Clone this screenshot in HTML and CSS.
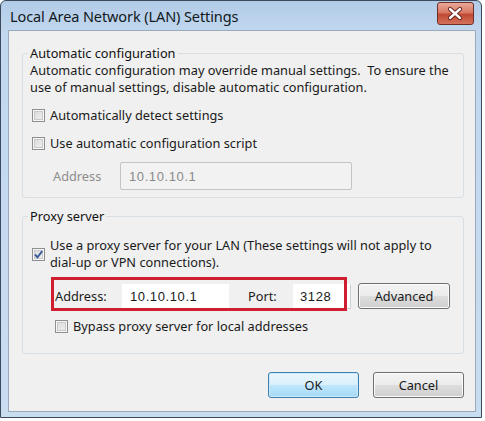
FILE: index.html
```html
<!DOCTYPE html>
<html>
<head>
<meta charset="utf-8">
<link rel="stylesheet" href="styles.css">
</head>
<body>
<div class="window">
  <div class="titlebar">
    <span class="title">Local Area Network (LAN) Settings</span>
    <span class="close">
      <svg width="37" height="23" viewBox="0 0 37 23">
        <path d="M13.5 7 L23.5 16 M23.5 7 L13.5 16" stroke="#6b2a22" stroke-width="4.6" stroke-linecap="round"/>
        <path d="M13.5 7 L23.5 16 M23.5 7 L13.5 16" stroke="#ffffff" stroke-width="2.6" stroke-linecap="round"/>
      </svg>
    </span>
  </div>
  <div class="client">
    <fieldset class="group first">
      <legend>Automatic configuration</legend>
      <p class="desc">Automatic configuration may override manual settings.&nbsp; To ensure the<br>use of manual settings, disable automatic configuration.</p>
      <div class="check r1"><span class="box"></span><span>Automatically detect settings</span></div>
      <div class="check r2"><span class="box"></span><span>Use automatic configuration script</span></div>
      <div class="script-row">
        <span class="dim-lbl">Address</span>
        <span class="field disabled">10.10.10.1</span>
      </div>
    </fieldset>
    <fieldset class="group second">
      <legend>Proxy server</legend>
      <div class="check multi">
        <span class="box">
          <svg width="11" height="11" viewBox="0 0 11 11"><path d="M2 5.5 L4.5 8.3 L9.2 2.2" fill="none" stroke="#3b5a9e" stroke-width="1.9"/></svg>
        </span>
        <span>Use a proxy server for your LAN (These settings will not apply to<br>dial-up or VPN connections).</span>
      </div>
      <div class="proxy-row">
        <span class="lbl addr">Address:</span>
        <span class="field addr-field">10.10.10.1</span>
        <span class="lbl port">Port:</span>
        <span class="field port-field">3128</span>
        <span class="btn adv">Advanced</span>
        <span class="highlight"></span>
      </div>
      <div class="check bypass"><span class="box"></span><span>Bypass proxy server for local addresses</span></div>
    </fieldset>
    <div class="actions">
      <span class="btn default">OK</span>
      <span class="btn">Cancel</span>
    </div>
  </div>
</div>
</body>
</html>
```

FILE: styles.css
```css
html, body {
  margin: 0;
  padding: 0;
  background: #ffffff;
}

body {
  font-family: "Noto Sans", "DejaVu Sans", sans-serif;
  font-size: 12.75px;
  color: #1a1a1a;
}

.window {
  width: 480px;
  height: 416px;
  border: 1px solid #3a4a5c;
  border-radius: 6px 6px 0 0;
  background: linear-gradient(180deg, #b2cbe7 0px, #c1d7ee 30px, #c9ddf1 100%);
  display: flex;
  flex-direction: column;
}

.titlebar {
  height: 29px;
  display: flex;
  align-items: flex-start;
  justify-content: space-between;
  padding-left: 9px;
}

.title {
  font-size: 14.5px;
  line-height: 20px;
  margin-top: 5px;
  color: #111820;
  letter-spacing: -0.1px;
}

.close {
  width: 37px;
  height: 23px;
  margin-top: 1px;
  margin-right: 7px;
  border: 1px solid #6e2f28;
  border-radius: 3px;
  box-sizing: border-box;
  background: linear-gradient(180deg, #e9a898 0%, #d97a66 45%, #c04a34 55%, #d4725c 100%);
  display: flex;
  overflow: hidden;
}

.close svg {
  margin-left: -1px;
  margin-top: -1px;
}

.client {
  flex: 1;
  margin: 0 5px 5px 7px;
  border: 1px solid #9aaabb;
  background: #f0f0f0;
  padding: 14px 11px 0 13px;
  display: flex;
  flex-direction: column;
}

.group {
  margin: 0;
  border: 1px solid #d8dfe4;
  border-radius: 3px;
  padding: 1px 7px 7px 7px;
  min-width: 0;
}

.group legend {
  padding: 0 2px;
  margin-left: -2px;
  line-height: 16px;
  color: #111;
}

.group.second {
  margin-top: 10px;
  padding-bottom: 18px;
}

.desc {
  margin: 0;
  line-height: 17px;
  white-space: nowrap;
}

.check {
  display: flex;
  align-items: center;
  line-height: 17px;
  white-space: nowrap;
}

.check.r1 { margin-top: 11px; }
.check.r2 { margin-top: 11px; }

.box {
  width: 13px;
  height: 13px;
  box-sizing: border-box;
  border: 1px solid #8e8f8f;
  background: linear-gradient(135deg, #d8d8d8 0%, #f2f2f2 100%);
  box-shadow: inset 0 0 0 1px #f6f6f6, inset 0 0 0 2px #c9c9c9;
  margin-left: 2px;
  margin-right: 5px;
  flex: none;
  display: flex;
  align-items: center;
  justify-content: center;
}

.box svg {
  display: block;
}

.check.multi {
  margin-top: 12px;
}

.check.multi .box {
  align-self: center;
  margin-top: 1px;
}

.script-row {
  margin-top: 10px;
  display: flex;
  align-items: center;
  height: 28px;
}

.dim-lbl {
  color: #8d8d8d;
  padding-left: 23px;
  box-sizing: border-box;
  width: 90px;
}

.field {
  box-sizing: border-box;
  border: 1px solid #abadb3;
  border-top-color: #a0a3a8;
  background: #ffffff;
  padding-left: 7px;
  letter-spacing: 0.6px;
  font-family: "Liberation Sans", "DejaVu Sans", sans-serif;
  font-size: 13px;
  display: flex;
  align-items: center;
}

.field.disabled {
  width: 232px;
  height: 28px;
  border-color: #c4c4c4;
  background: #f2f2f2;
  color: #8a8a8a;
  border-radius: 2px;
  padding-left: 8px;
}

.proxy-row {
  position: relative;
  margin-top: 12px;
  height: 26px;
  display: flex;
  align-items: center;
}

.lbl.addr {
  width: 92px;
  padding-left: 25px;
  box-sizing: border-box;
}

.addr-field {
  width: 107px;
  height: 25px;
  border-color: #ffffff;
}

.lbl.port {
  width: 64px;
  padding-left: 19px;
  box-sizing: border-box;
}

.port-field {
  width: 58px;
  height: 25px;
  padding-left: 6px;
  border-color: #ffffff #d0d0d0 #d0d0d0 #ffffff;
}

.highlight {
  position: absolute;
  left: 21px;
  top: -6px;
  width: 296px;
  height: 34px;
  box-sizing: border-box;
  border: 3px solid #cf1f2e;
}

.btn {
  box-sizing: border-box;
  width: 91px;
  height: 26px;
  border: 1px solid #707070;
  border-radius: 3px;
  background: linear-gradient(180deg, #f4f4f4 0%, #ebebeb 48%, #dddddd 52%, #cfcfcf 100%);
  box-shadow: inset 0 0 0 1px #fbfbfb;
  display: flex;
  align-items: center;
  justify-content: center;
  color: #1a1a1a;
}

.btn.adv {
  margin-left: 7px;
  width: 92px;
}

.check.bypass {
  margin-top: 9px;
  padding-left: 23px;
}

.actions {
  margin-top: 18px;
  display: flex;
  justify-content: flex-end;
  gap: 14px;
}

.btn.default {
  border-color: #3c7fb1;
  background: linear-gradient(180deg, #eaf6fd 0%, #d9f0fc 48%, #bee6fd 52%, #a7d9f5 100%);
  box-shadow: inset 0 0 0 1px #cdeafb;
}
```
